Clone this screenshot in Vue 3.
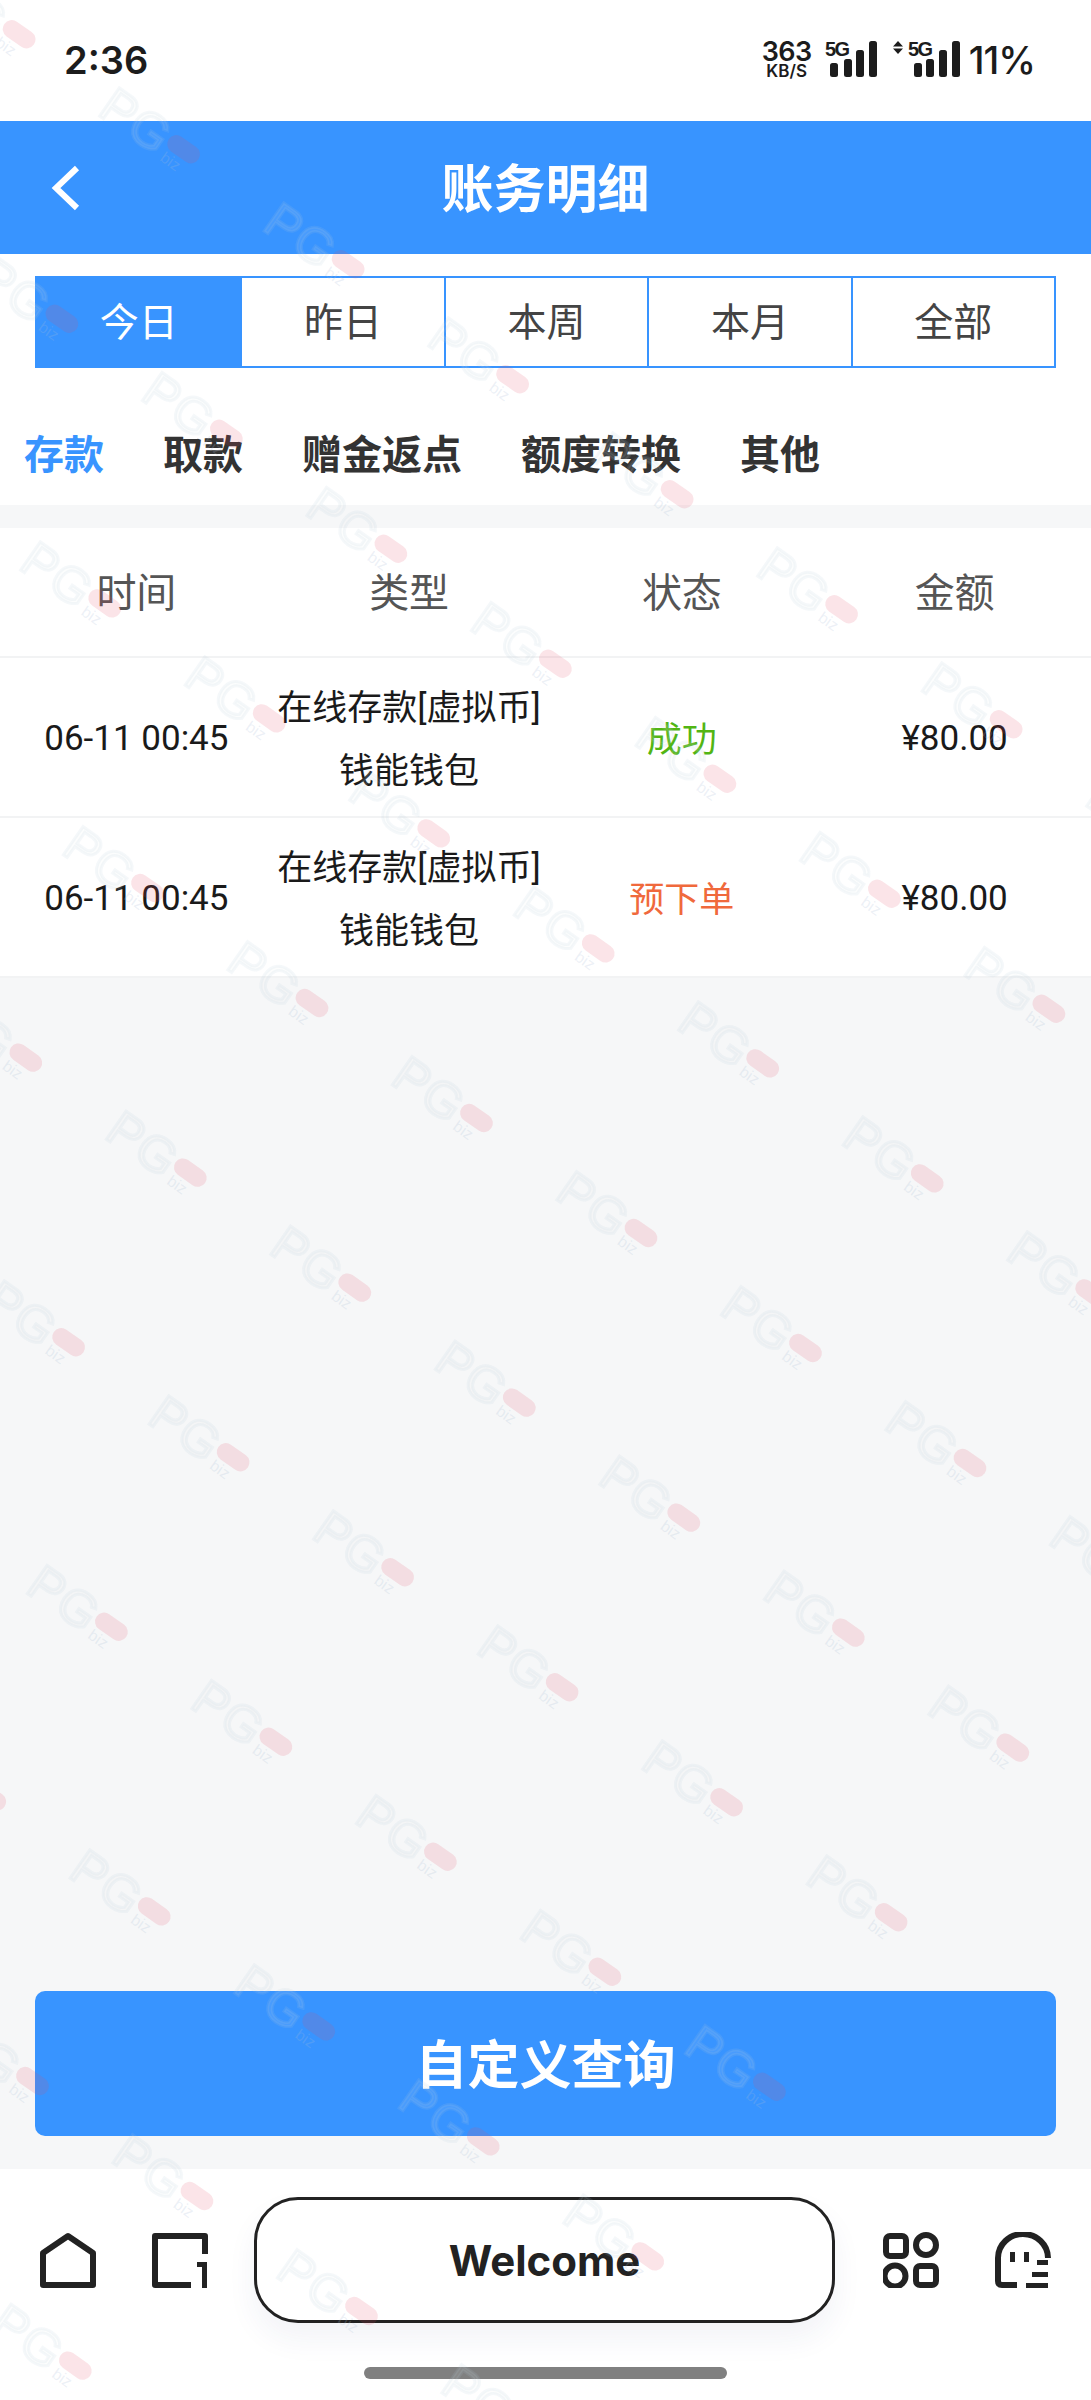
<script setup>
import { ref } from 'vue'

const ranges = ['今日', '昨日', '本周', '本月', '全部']
const categories = ['存款', '取款', '赠金返点', '额度转换', '其他']
const columns = ['时间', '类型', '状态', '金额']

const records = [
  { time: '06-11 00:45', type: '在线存款[虚拟币]', channel: '钱能钱包', status: '成功', tone: 'ok', amount: '¥80.00' },
  { time: '06-11 00:45', type: '在线存款[虚拟币]', channel: '钱能钱包', status: '预下单', tone: 'pending', amount: '¥80.00' },
]

const activeRange = ref(0)
const activeCategory = ref(0)

// watermark stamps sit on a skewed lattice, the block stops short of the top and bottom right
const stamps = []
for (let j = -3; j < 8; j++) {
  for (let i = -12; i + j <= 3; i++) {
    const x = 641 + i * 164.5 + j * 42.8
    const y = 1233 + i * 115 + j * 284.6
    if (x > -60 && x < 1180 && y > -60 && y < 2460) {
      stamps.push({ id: `${i}-${j}`, transform: `translate(${x} ${y}) rotate(35)` })
    }
  }
}
</script>

<template>
  <div class="page">
    <div class="status-bar">
      <span class="clock">2:36</span>
      <div class="status-right">
        <div class="speed">
          <span class="speed-num">363</span>
          <span class="speed-unit">KB/S</span>
        </div>
        <svg class="signal" width="52" height="38" viewBox="0 0 52 38">
          <text x="0" y="15" class="signal-label">5G</text>
          <rect x="5" y="22" width="8" height="14" rx="2.5" />
          <rect x="19" y="18" width="8" height="18" rx="2.5" />
          <rect x="31" y="9" width="8" height="27" rx="2.5" />
          <rect x="44" y="0" width="8" height="36" rx="2.5" />
        </svg>
        <svg class="signal signal-data" width="67" height="38" viewBox="0 0 67 38">
          <path d="M5 0 L10 5.5 H0 Z M5 13 L10 7.5 H0 Z" />
          <text x="15" y="15" class="signal-label">5G</text>
          <rect x="21" y="22" width="8" height="14" rx="2.5" />
          <rect x="33" y="18" width="8" height="18" rx="2.5" />
          <rect x="46" y="9" width="8" height="27" rx="2.5" />
          <rect x="59" y="0" width="8" height="36" rx="2.5" />
        </svg>
        <span class="battery">11%</span>
      </div>
    </div>

    <header class="top-bar">
      <svg class="back" width="32" height="46" viewBox="0 0 32 46">
        <path d="M27 3 L6 23 L27 43" />
      </svg>
      <h1>账务明细</h1>
    </header>

    <div class="range-wrap">
      <div class="range-tabs">
        <button
          v-for="(item, i) in ranges"
          :key="item"
          class="range-tab"
          :class="{ active: i === activeRange }"
          @click="activeRange = i"
        >
          {{ item }}
        </button>
      </div>
    </div>

    <nav class="categories">
      <span
        v-for="(item, i) in categories"
        :key="item"
        class="category"
        :class="{ active: i === activeCategory }"
        @click="activeCategory = i"
      >
        {{ item }}
      </span>
    </nav>

    <main class="content">
      <div class="table">
        <div class="row head">
          <span v-for="col in columns" :key="col">{{ col }}</span>
        </div>
        <div v-for="(rec, i) in records" :key="i" class="row record">
          <span>{{ rec.time }}</span>
          <span class="type">
            <span>{{ rec.type }}</span>
            <span>{{ rec.channel }}</span>
          </span>
          <span :class="rec.tone">{{ rec.status }}</span>
          <span>{{ rec.amount }}</span>
        </div>
      </div>
      <button class="query">自定义查询</button>
    </main>

    <footer class="dock">
      <div class="dock-row">
        <svg class="dock-icon first" viewBox="0 0 56 56">
          <path d="M28 4 L53 21 V53 H3 V21 Z" />
        </svg>
        <svg class="dock-icon second" viewBox="0 0 56 56">
          <path d="M39 53 H3 V4 H53 V22" />
          <path class="solid" d="M45 30 H55 V56 H50 V35 H45 Z" />
        </svg>
        <button class="welcome">Welcome</button>
        <svg class="dock-icon third" viewBox="0 0 56 56">
          <rect x="3" y="4" width="20" height="20" rx="4" />
          <circle cx="43" cy="13" r="10" />
          <circle cx="12" cy="44" r="10.500" />
          <rect x="33" y="34" width="20" height="19" rx="4" />
        </svg>
        <svg class="dock-icon" viewBox="0 0 56 56">
          <path d="M22 53 H7 Q3 53 3 49 V26 A25 24 0 0 1 53 26" />
          <path class="solid" d="M15 20 H20 V30 H15 Z M29 20 H34 V30 H29 Z M42 28 H53 V33 H42 Z M37 40 H53 V45 H37 Z M31 51 H53 V56 H31 Z" />
        </svg>
      </div>
      <div class="home-bar"></div>
    </footer>

    <svg class="watermark" width="1091" height="2400" viewBox="0 0 1091 2400" aria-hidden="true">
      <g v-for="stamp in stamps" :key="stamp.id" :transform="stamp.transform">
        <text x="-92" y="21" class="mark-letters">PG</text>
        <rect x="-18" y="-9" width="36" height="18" rx="9" class="mark-pill" />
        <text x="-14" y="23" class="mark-small">biz</text>
      </g>
    </svg>
  </div>
</template>

<style>
html,
body {
  margin: 0;
  background: #fff;
}
</style>

<style scoped>
.page {
  position: relative;
  display: flex;
  flex-direction: column;
  height: 2400px;
  overflow: hidden;
  background: #fff;
  color: #222;
  font-family: Roboto, "Noto Sans CJK SC", sans-serif;
}

.status-bar {
  display: flex;
  align-items: center;
  justify-content: space-between;
  box-sizing: border-box;
  height: 121px;
  padding: 0 56px 2px 64px;
  font-family: Inter, sans-serif;
  color: #1c1c1c;
}

.clock {
  font-size: 38px;
  font-weight: 600;
}

.status-right {
  display: flex;
  align-items: center;
}

.speed {
  display: flex;
  flex-direction: column;
  align-items: center;
  width: 50px;
  margin-right: 13px;
  font-weight: 600;
}

.speed-num {
  font-size: 27px;
  line-height: 23px;
  letter-spacing: -0.5px;
}

.speed-unit {
  font-size: 17px;
  line-height: 16px;
}

.signal {
  fill: #1c1c1c;
  margin-right: 16px;
  overflow: visible;
}

.signal-data {
  margin-right: 9px;
}

.signal-label {
  font-family: "Liberation Sans", sans-serif;
  font-size: 20px;
  font-weight: 700;
  letter-spacing: -1.5px;
}

.battery {
  font-size: 38px;
  font-weight: 500;
  letter-spacing: -1px;
}

.top-bar {
  position: relative;
  display: flex;
  align-items: center;
  justify-content: center;
  height: 133px;
  padding-bottom: 5px;
  box-sizing: border-box;
  background: #3894ff;
}

.top-bar h1 {
  margin: 0;
  color: #fff;
  font-size: 52px;
  font-weight: 700;
}

.back {
  position: absolute;
  left: 50px;
  top: 44px;
  fill: none;
  stroke: #fff;
  stroke-width: 6;
}

.range-wrap {
  padding: 22px 35px 0;
}

.range-tabs {
  display: grid;
  grid-template-columns: repeat(5, 1fr);
  height: 92px;
  box-sizing: border-box;
  border: 2px solid #3894ff;
}

.range-tab {
  padding: 0 0 6px;
  border: 0;
  border-left: 2px solid #3894ff;
  background: none;
  color: #444;
  font: inherit;
  font-size: 39px;
}

.range-tab:first-child {
  border-left: 0;
}

.range-tab.active {
  background: #3894ff;
  color: #fff;
}

.categories {
  display: flex;
  gap: 59px;
  height: 40px;
  padding: 68px 0 29px 24px;
}

.category {
  color: #333;
  font-size: 40px;
  font-weight: 700;
  line-height: 40px;
}

.category.active {
  color: #3894ff;
}

.content {
  flex: 1;
  display: flex;
  flex-direction: column;
  padding-top: 23px;
  background: #f6f7f8;
}

.table {
  background: #fff;
}

.row {
  display: grid;
  grid-template-columns: repeat(4, 1fr);
  align-items: center;
  justify-items: center;
  border-bottom: 2px solid #f2f3f4;
  box-sizing: border-box;
}

.head {
  height: 130px;
  padding-bottom: 4px;
  color: #555;
  font-size: 40px;
}

.record {
  height: 160px;
  padding-top: 2px;
  color: #1a1a1a;
  font-size: 35px;
}

.type {
  display: flex;
  flex-direction: column;
  align-items: center;
  padding-top: 3px;
  line-height: 63px;
}

.ok,
.pending {
  padding-bottom: 4px;
}

.ok {
  color: #52b513;
}

.pending {
  color: #f0693c;
}

.query {
  margin: auto 35px 33px;
  height: 145px;
  padding: 0 0 5px;
  border: 0;
  border-radius: 10px;
  background: #3894ff;
  color: #fff;
  font: inherit;
  font-size: 52px;
  font-weight: 700;
}

.dock {
  display: flex;
  flex-direction: column;
  align-items: center;
  height: 231px;
  padding-top: 28px;
  box-sizing: border-box;
  background: #fff;
}

.dock-row {
  display: flex;
  align-items: center;
  width: 100%;
  box-sizing: border-box;
  padding-left: 40px;
}

.dock-icon {
  width: 56px;
  height: 56px;
  flex: none;
  fill: none;
  stroke: #222;
  stroke-width: 6;
  stroke-linejoin: round;
}

.dock-icon .solid {
  fill: #222;
  stroke: none;
}

.first {
  margin-right: 56px;
}

.second {
  margin-right: 46px;
}

.third {
  margin-right: 56px;
}

.welcome {
  flex: none;
  width: 581px;
  height: 126px;
  margin-right: 48px;
  border: 3px solid #222;
  border-radius: 44px;
  background: #fff;
  box-shadow: 0 16px 30px rgba(40, 50, 120, 0.06);
  color: #222;
  font-family: Inter, sans-serif;
  font-size: 42px;
  font-weight: 700;
}

.home-bar {
  width: 363px;
  height: 12px;
  margin-top: 44px;
  border-radius: 6px;
  background: #808080;
}

.watermark {
  position: absolute;
  inset: 0;
  pointer-events: none;
}

.mark-letters {
  font-family: "Liberation Sans", sans-serif;
  font-size: 50px;
  letter-spacing: 1px;
  fill: rgba(225, 232, 240, 0.1);
  stroke: rgba(180, 198, 220, 0.13);
  stroke-width: 3;
}

.mark-pill {
  fill: rgba(225, 75, 100, 0.15);
}

.mark-small {
  font-family: "Liberation Sans", sans-serif;
  font-size: 16px;
  fill: rgba(170, 190, 215, 0.22);
}
</style>
